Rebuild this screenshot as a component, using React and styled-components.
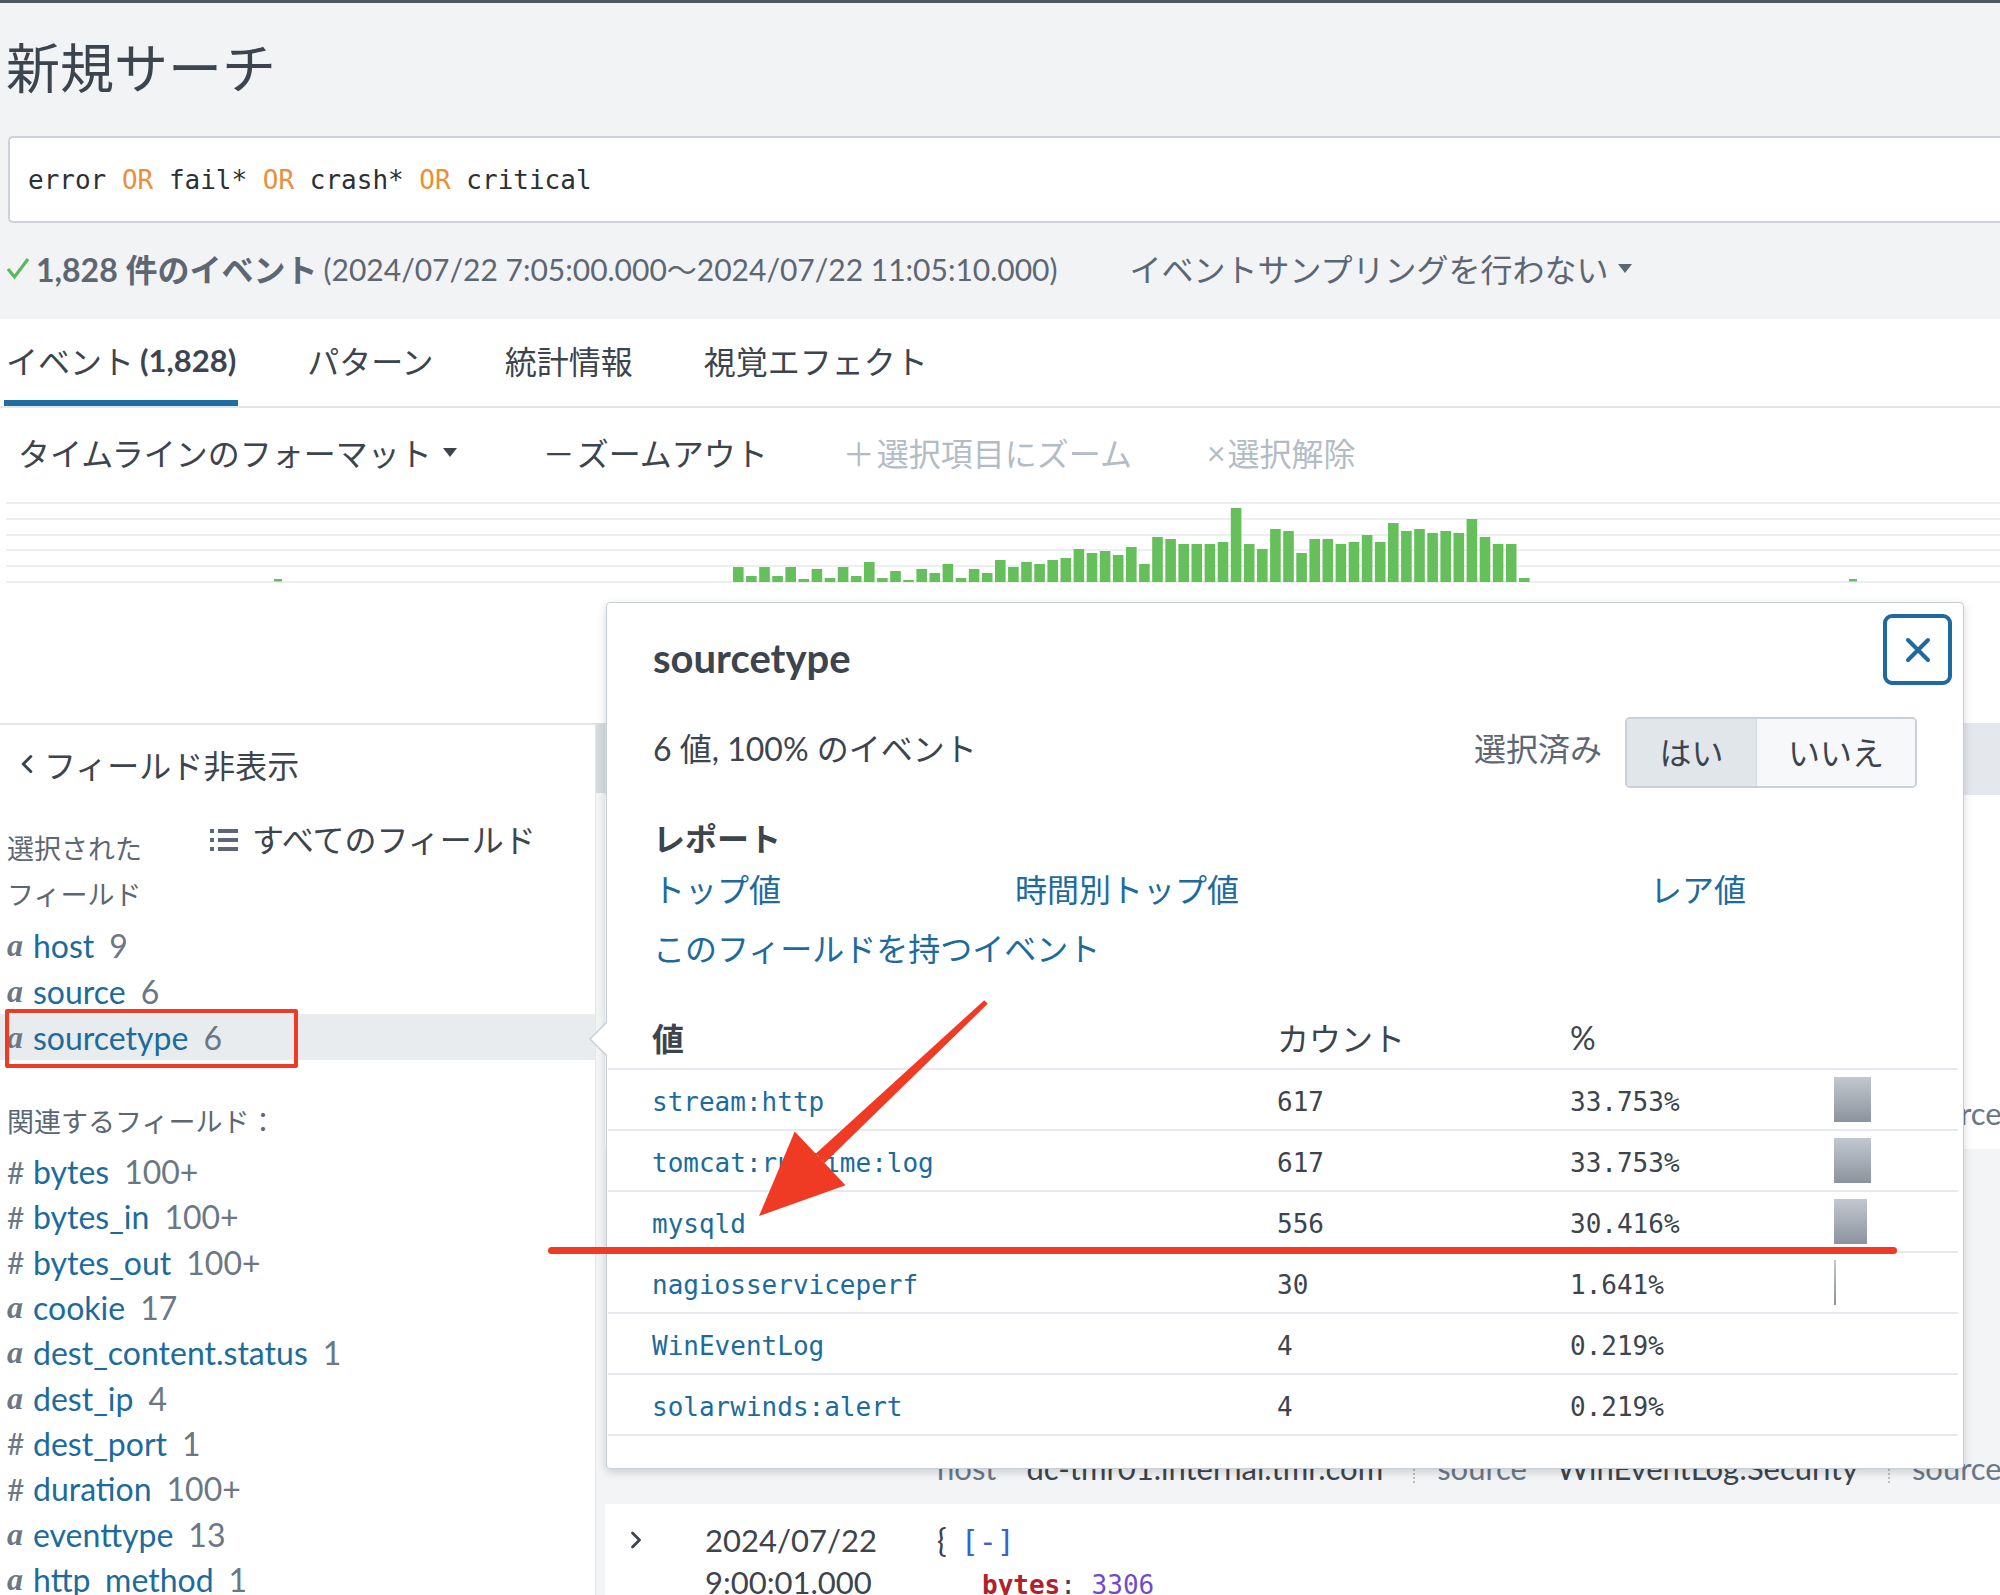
import React from 'react';
import styled, { createGlobalStyle } from 'styled-components';
import { ChevronLeft, ChevronRight } from 'lucide-react';

const SANS = `"Lato", "Noto Sans CJK JP", sans-serif`;
const MONO = `"DejaVu Sans Mono", "Noto Sans CJK JP", monospace`;
const TEXT = '#3c444d';
const GRAY = '#5c6773';
const LIGHT = '#b3bcc5';
const BLUE = '#1c6b9c';
const RED = '#ef3b24';

const Global = createGlobalStyle`
  html, body { margin: 0; padding: 0; background: #fff; }
  body { font-family: ${SANS}; color: ${TEXT}; }
`;

const Page = styled.div`
  position: relative;
  width: 2000px;
  height: 1595px;
  overflow: hidden;
  background: #fff;
`;

const Header = styled.header`
  background: #f2f3f5;
  border-top: 3px solid #50565d;
  padding-left: 8px;
`;

const Title = styled.h1`
  margin: 0 0 0 -2px;
  padding-top: 6px;
  height: 120px;
  line-height: 120px;
  font-size: 54px;
  font-weight: 400;
  color: ${TEXT};
`;

const SearchBox = styled.div`
  margin-top: 7px;
  height: 87px;
  box-sizing: border-box;
  background: #fff;
  border: 2px solid #cdd3d9;
  border-right: none;
  border-radius: 5px 0 0 5px;
  display: flex;
  align-items: center;
  padding-left: 18px;
  font-family: ${MONO};
  font-size: 26px;
  color: #2b3035;
  white-space: pre;
`;

const Op = styled.span`
  color: #e8903a;
`;

const StatusLine = styled.div`
  height: 90px;
  padding-bottom: 6px;
  display: flex;
  align-items: center;
  font-size: 32px;
  color: ${GRAY};
  margin-left: -2px;
`;

const Count = styled.span`
  font-weight: 700;
  color: ${GRAY};
  margin-left: 6px;
`;

const Range = styled.span`
  margin-left: 6px;
  font-size: 30px;
`;

const Sampling = styled.span`
  margin-left: 72px;
  display: inline-flex;
  align-items: center;
  gap: 8px;
`;

const Caret = ({ color = GRAY }) => (
  <svg width="16" height="11" viewBox="0 0 16 11">
    <path d="M1 1 L15 1 L8 10 Z" fill={color} />
  </svg>
);

const TabsBar = styled.nav`
  height: 89px;
  box-sizing: border-box;
  border-bottom: 2px solid #e3e6ea;
  display: flex;
  align-items: flex-end;
  gap: 67px;
  padding-left: 4px;
`;

const Tab = styled.div`
  height: 86px;
  box-sizing: border-box;
  padding: 0 2px;
  display: flex;
  align-items: center;
  font-size: 32px;
  color: ${TEXT};
  border-bottom: 6px solid ${(p) => (p.$active ? '#1f6ea3' : 'transparent')};
`;

const TabCount = styled.span`
  font-weight: 700;
  font-size: 31px;
  margin-left: 6px;
`;

const Toolbar = styled.div`
  height: 72px;
  margin-top: 8px;
  padding-left: 18px;
  display: flex;
  align-items: center;
  gap: 75px;
  font-size: 32px;
`;

const ToolItem = styled.span`
  display: inline-flex;
  align-items: center;
  gap: 10px;
  margin-right: ${(p) => p.$mr || 0}px;
  color: ${(p) => (p.$disabled ? LIGHT : TEXT)};
`;

const Sign = styled.span`
  font-size: 32px;
  margin-right: -8px;
`;

const ChartWrap = styled.div`
  height: 100px;
`;

const Spacer = styled.div`
  height: 135px;
`;

const Bottom = styled.div`
  display: grid;
  grid-template-columns: 595px 10px 1fr;
  height: 872px;
`;

const Sidebar = styled.aside`
  border-top: 2px solid #e1e6eb;
`;

const HideRow = styled.div`
  display: flex;
  align-items: center;
  height: 40px;
  padding: 19px 0 42px 12px;
  font-size: 32px;
  color: ${TEXT};
  gap: 2px;
`;

const SelectedHead = styled.div`
  display: flex;
  padding-left: 7px;
`;

const SmallLabel = styled.div`
  font-size: 27px;
  line-height: 46px;
  color: ${GRAY};
  width: 203px;
`;

const AllFields = styled.div`
  display: flex;
  align-items: center;
  gap: 14px;
  font-size: 32px;
  line-height: 46px;
  color: ${TEXT};
  margin-top: -9px;
  height: 46px;
`;

const FieldList = styled.div`
  margin-top: ${(p) => p.$mt}px;
`;

const FieldRow = styled.div`
  display: flex;
  align-items: center;
  height: ${(p) => p.$h}px;
  padding-left: 7px;
  background: ${(p) => (p.$hl ? '#e9ecef' : 'transparent')};
  font-size: 32px;
`;

const TypeMark = styled.span`
  width: 26px;
  color: #6b7785;
  font-family: ${(p) => (p.$num ? SANS : '"Liberation Serif", serif')};
  font-style: ${(p) => (p.$num ? 'normal' : 'italic')};
  font-weight: ${(p) => (p.$num ? 400 : 700)};
  font-size: ${(p) => (p.$num ? 30 : 32)}px;
`;

const FieldName = styled.span`
  color: ${BLUE};
`;

const FieldCount = styled.span`
  color: #6b7785;
  margin-left: 15px;
`;

const RelatedHead = styled.div`
  font-size: 27px;
  line-height: 46px;
  color: ${GRAY};
  padding-left: 7px;
  margin-top: 39px;
`;

const ScrollTrack = styled.div`
  background: #f3f4f6;
  border-left: 1px solid #e1e6eb;
`;

const ScrollThumb = styled.div`
  height: 70px;
  background: #d6dbe0;
`;

const Events = styled.section`
  display: flex;
  flex-direction: column;
`;

const EventsHead = styled.div`
  height: 72px;
  background: #e4e8ec;
`;

const EventRow = styled.div`
  height: ${(p) => p.$h}px;
  box-sizing: border-box;
  background: ${(p) => (p.$shade ? '#f2f4f5' : '#fff')};
  display: flex;
  flex-direction: column;
  justify-content: flex-end;
  padding-bottom: ${(p) => p.$pb}px;
`;

const MetaLine = styled.div`
  display: flex;
  align-items: center;
  height: 46px;
  padding-left: 332px;
  font-size: 31px;
  white-space: nowrap;
  gap: 22px;
`;

const MetaKey = styled.span`
  color: #6b7785;
`;

const MetaVal = styled.span`
  color: ${TEXT};
  margin-left: 8px;
`;

const MetaSep = styled.span`
  width: 0;
  height: 30px;
  border-left: 2px dotted #b8c0c8;
  margin-left: 8px;
`;

const EventBody = styled.div`
  display: grid;
  grid-template-columns: 100px 232px 1fr;
  padding-top: 15px;
  font-size: 31px;
  line-height: 42px;
`;

const Expander = styled.div`
  padding-left: 17px;
  height: 42px;
  display: flex;
  align-items: center;
  color: ${TEXT};
`;

const Raw = styled.div`
  font-family: ${MONO};
  font-size: 26px;
`;

const RawIndent = styled.div`
  padding-left: 45px;
`;

const Brace = styled.span`
  font-family: ${SANS};
  font-size: 32px;
  color: ${TEXT};
`;

const Collapse = styled.span`
  color: #3863c9;
  font-size: 30px;
  margin-left: 14px;
`;

const JKey = styled.span`
  color: #b0222a;
  font-weight: 700;
`;

const JNum = styled.span`
  color: #6f4bc9;
`;

/* Popup */
const Popup = styled.div`
  position: absolute;
  left: 606px;
  top: 602px;
  width: 1358px;
  height: 867px;
  box-sizing: border-box;
  background: #fff;
  border: 1px solid #c7ced5;
  border-radius: 4px;
  box-shadow: 0 3px 10px rgba(0, 0, 0, 0.16);
  padding: 0 46px;
  z-index: 2;
  &::before,
  &::after {
    content: '';
    position: absolute;
    top: 418px;
    width: 0;
    height: 0;
    border-top: 18px solid transparent;
    border-bottom: 18px solid transparent;
  }
  &::before {
    left: -18px;
    border-right: 18px solid #c7ced5;
  }
  &::after {
    left: -16px;
    border-right: 18px solid #fff;
  }
`;

const PopHeader = styled.div`
  height: 114px;
  display: flex;
  justify-content: space-between;
  align-items: center;
`;

const PopTitle = styled.h2`
  margin: 0 0 4px;
  font-size: 40px;
  font-weight: 700;
  color: ${TEXT};
`;

const CloseButton = styled.button`
  align-self: flex-start;
  margin-top: 11px;
  margin-right: -35px;
  width: 69px;
  height: 71px;
  box-sizing: border-box;
  border: 4px solid #1e6aa0;
  border-radius: 9px;
  background: #fff;
  display: flex;
  align-items: center;
  justify-content: center;
  padding: 0;
`;

const SummaryRow = styled.div`
  height: 71px;
  display: flex;
  align-items: center;
  justify-content: space-between;
  font-size: 32px;
  color: ${TEXT};
`;

const Lifted = styled.span`
  margin-bottom: 12px;
`;

const SelGroup = styled.div`
  display: flex;
  align-items: center;
  gap: 23px;
  color: ${GRAY};
`;

const Toggle = styled.div`
  display: flex;
  height: 71px;
  box-sizing: border-box;
  border: 2px solid #c9d0d7;
  border-radius: 5px;
  overflow: hidden;
`;

const ToggleOpt = styled.div`
  width: ${(p) => p.$w}px;
  display: flex;
  align-items: center;
  justify-content: center;
  padding-bottom: 4px;
  background: ${(p) => (p.$on ? '#e1e6eb' : '#f7f8fa')};
  color: ${TEXT};
  border-left: ${(p) => (p.$first ? 'none' : '1px solid #d5dbe1')};
`;

const ReportTitle = styled.div`
  margin-top: 28px;
  line-height: 46px;
  font-size: 32px;
  font-weight: 700;
  color: ${TEXT};
`;

const Links = styled.div`
  display: grid;
  grid-template-columns: 362px 635px auto;
  margin-top: 5px;
  line-height: 46px;
  font-size: 32px;
`;

const Link = styled.a`
  color: ${BLUE};
  text-decoration: none;
`;

const EventsLink = styled(Link)`
  display: block;
  margin-top: 13px;
  line-height: 46px;
  font-size: 32px;
`;

const Table = styled.div`
  margin: 34px -41px 0 -45px;
`;

const TRow = styled.div`
  display: grid;
  grid-template-columns: 669px 293px 264px 1fr;
  height: ${(p) => (p.$head ? 64 : 61)}px;
  box-sizing: border-box;
  border-bottom: 2px solid #e6e9ed;
  align-items: center;
`;

const TH = styled.div`
  font-size: 32px;
  font-weight: ${(p) => (p.$bold ? 700 : 400)};
  color: ${TEXT};
  padding-left: ${(p) => (p.$first ? 44 : 0)}px;
`;

const TD = styled.div`
  font-family: ${MONO};
  font-size: 26px;
  padding-top: 4px;
  color: ${(p) => (p.$link ? BLUE : TEXT)};
  padding-left: ${(p) => (p.$first ? 44 : 0)}px;
`;

const BarCell = styled.div`
  display: flex;
  align-items: center;
  height: 100%;
`;

const Bar = styled.div`
  height: 45px;
  background: linear-gradient(180deg, #c3c8cf 0%, #8b939e 100%);
`;

/* Annotations */
const RedBox = styled.div`
  position: absolute;
  left: 5px;
  top: 1009px;
  width: 293px;
  height: 59px;
  box-sizing: border-box;
  border: 4px solid ${RED};
  border-radius: 2px;
  z-index: 3;
`;

const RedLine = styled.div`
  position: absolute;
  left: 548px;
  top: 1247px;
  width: 1349px;
  height: 7px;
  border-radius: 4px;
  background: ${RED};
  z-index: 3;
`;

const ArrowSvg = styled.svg`
  position: absolute;
  left: 0;
  top: 0;
  z-index: 3;
  pointer-events: none;
`;

const BARS = [15, 6, 15, 6, 15, 3, 13, 4, 15, 6, 20, 4, 11, 2, 13, 9, 18, 4, 13, 9, 22, 15, 20, 18, 22, 24, 33, 29, 31, 27, 35, 18, 45, 43, 38, 38, 38, 40, 74, 38, 33, 53, 51, 29, 43, 43, 38, 40, 47, 40, 59, 51, 53, 49, 51, 49, 63, 45, 38, 38, 4];

const Chart = () => (
  <svg width="2000" height="100" viewBox="0 0 2000 100">
    {[15, 31, 47, 62, 78, 94].map((y) => (
      <line key={y} x1="6" x2="2000" y1={y} y2={y} stroke="#eceef1" strokeWidth="2" />
    ))}
    <rect x="274" y="91" width="8" height="2.5" fill="#65bf5a" />
    <rect x="1849" y="91" width="8" height="2.5" fill="#65bf5a" />
    {BARS.map((h, i) => (
      <rect key={i} x={733 + i * 13.1} y={94 - h} width="10.6" height={h} fill="#65bf5a" />
    ))}
  </svg>
);

const ListIcon = () => (
  <svg width="28" height="24" viewBox="0 0 28 24">
    {[3, 12, 21].map((y) => (
      <g key={y}>
        <rect x="0" y={y - 2} width="4" height="4" fill={GRAY} />
        <rect x="8" y={y - 2} width="20" height="4" fill={GRAY} />
      </g>
    ))}
  </svg>
);

const SELECTED = [
  { t: 'a', n: 'host', c: '9' },
  { t: 'a', n: 'source', c: '6' },
  { t: 'a', n: 'sourcetype', c: '6', hl: true },
];

const RELATED = [
  { t: '#', n: 'bytes', c: '100+' },
  { t: '#', n: 'bytes_in', c: '100+' },
  { t: '#', n: 'bytes_out', c: '100+' },
  { t: 'a', n: 'cookie', c: '17' },
  { t: 'a', n: 'dest_content.status', c: '1' },
  { t: 'a', n: 'dest_ip', c: '4' },
  { t: '#', n: 'dest_port', c: '1' },
  { t: '#', n: 'duration', c: '100+' },
  { t: 'a', n: 'eventtype', c: '13' },
  { t: 'a', n: 'http_method', c: '1' },
];

const VALUES = [
  { v: 'stream:http', c: '617', p: 33.753 },
  { v: 'tomcat:runtime:log', c: '617', p: 33.753 },
  { v: 'mysqld', c: '556', p: 30.416 },
  { v: 'nagiosserviceperf', c: '30', p: 1.641 },
  { v: 'WinEventLog', c: '4', p: 0.219 },
  { v: 'solarwinds:alert', c: '4', p: 0.219 },
];

const Field = ({ f, h }) => (
  <FieldRow $h={h} $hl={f.hl}>
    <TypeMark $num={f.t === '#'}>{f.t}</TypeMark>
    <FieldName>{f.n}</FieldName>
    <FieldCount>{f.c}</FieldCount>
  </FieldRow>
);

const Meta = () => (
  <MetaLine>
    <MetaKey>host</MetaKey>
    <MetaVal>dc-tmr01.internal.tmr.com</MetaVal>
    <MetaSep />
    <MetaKey>source</MetaKey>
    <MetaVal>WinEventLog:Security</MetaVal>
    <MetaSep />
    <MetaKey>sourcetype</MetaKey>
    <MetaVal>WinEventLog</MetaVal>
  </MetaLine>
);

/* arrow geometry */
const tip = [759, 1216];
const tail = [986, 1002];
const ux = tip[0] - tail[0];
const uy = tip[1] - tail[1];
const len = Math.hypot(ux, uy);
const u = [ux / len, uy / len];
const n = [-u[1], u[0]];
const base = [tip[0] - u[0] * 84, tip[1] - u[1] * 84];
const pt = (p, k) => `${p[0] + n[0] * k},${p[1] + n[1] * k}`;
const shaft = [pt(tail, 2.5), pt(tail, -2.5), pt(base, -6.5), pt(base, 6.5)].join(' ');
const head = [`${tip[0]},${tip[1]}`, pt(base, 37), pt(base, -37)].join(' ');

export default function App() {
  return (
    <Page>
      <Global />
      <Header>
        <Title>新規サーチ</Title>
        <SearchBox>
          error <Op>OR</Op> fail* <Op>OR</Op> crash* <Op>OR</Op> critical
        </SearchBox>
        <StatusLine>
          <svg width="24" height="24" viewBox="0 0 24 24">
            <path d="M2 13 L8.5 21 L22 3" fill="none" stroke="#5cb85c" strokeWidth="3.2" />
          </svg>
          <Count>1,828 件のイベント</Count>
          <Range>(2024/07/22 7:05:00.000〜2024/07/22 11:05:10.000)</Range>
          <Sampling>
            イベントサンプリングを行わない
            <Caret />
          </Sampling>
        </StatusLine>
      </Header>

      <TabsBar>
        <Tab $active>
          イベント<TabCount>(1,828)</TabCount>
        </Tab>
        <Tab>パターン</Tab>
        <Tab>統計情報</Tab>
        <Tab>視覚エフェクト</Tab>
      </TabsBar>

      <Toolbar>
        <ToolItem $mr={10}>
          タイムラインのフォーマット
          <Caret color={TEXT} />
        </ToolItem>
        <ToolItem>
          <Sign>－</Sign>ズームアウト
        </ToolItem>
        <ToolItem $disabled>
          <Sign>＋</Sign>選択項目にズーム
        </ToolItem>
        <ToolItem $disabled>
          <Sign>×</Sign>選択解除
        </ToolItem>
      </Toolbar>

      <ChartWrap>
        <Chart />
      </ChartWrap>
      <Spacer />

      <Bottom>
        <Sidebar>
          <HideRow>
            <ChevronLeft size={30} strokeWidth={2.4} color={TEXT} />
            フィールド非表示
          </HideRow>
          <SelectedHead>
            <SmallLabel>
              選択された
              <br />
              フィールド
            </SmallLabel>
            <AllFields>
              <ListIcon />
              すべてのフィールド
            </AllFields>
          </SelectedHead>
          <FieldList $mt={4}>
            {SELECTED.map((f) => (
              <Field key={f.n} f={f} h={46} />
            ))}
          </FieldList>
          <RelatedHead>関連するフィールド：</RelatedHead>
          <FieldList $mt={4}>
            {RELATED.map((f) => (
              <Field key={f.n} f={f} h={45.3} />
            ))}
          </FieldList>
        </Sidebar>
        <ScrollTrack>
          <ScrollThumb />
        </ScrollTrack>
        <Events>
          <EventsHead />
          <EventRow $h={354} $pb={13}>
            <Meta />
          </EventRow>
          <EventRow $h={355} $pb={13} $shade>
            <Meta />
          </EventRow>
          <EventBody>
            <Expander>
              <ChevronRight size={28} strokeWidth={2.4} />
            </Expander>
            <div>
              2024/07/22
              <br />
              9:00:01.000
            </div>
            <Raw>
              <div>
                <Brace>{'{'}</Brace>
                <Collapse>[-]</Collapse>
              </div>
              <RawIndent>
                <JKey>bytes</JKey>: <JNum>3306</JNum>
              </RawIndent>
            </Raw>
          </EventBody>
        </Events>
      </Bottom>

      <Popup>
        <PopHeader>
          <PopTitle>sourcetype</PopTitle>
          <CloseButton aria-label="close">
            <svg width="26" height="26" viewBox="0 0 26 26">
              <path d="M3 3 L23 23 M23 3 L3 23" stroke="#1e6aa0" strokeWidth="4" strokeLinecap="round" />
            </svg>
          </CloseButton>
        </PopHeader>
        <SummaryRow>
          <Lifted>6 値, 100% のイベント</Lifted>
          <SelGroup>
            <Lifted>選択済み</Lifted>
            <Toggle>
              <ToggleOpt $w={129} $on $first>
                はい
              </ToggleOpt>
              <ToggleOpt $w={158}>いいえ</ToggleOpt>
            </Toggle>
          </SelGroup>
        </SummaryRow>
        <ReportTitle>レポート</ReportTitle>
        <Links>
          <Link>トップ値</Link>
          <Link>時間別トップ値</Link>
          <Link>レア値</Link>
        </Links>
        <EventsLink>このフィールドを持つイベント</EventsLink>
        <Table>
          <TRow $head>
            <TH $first $bold>
              値
            </TH>
            <TH>カウント</TH>
            <TH>%</TH>
            <div />
          </TRow>
          {VALUES.map((r) => (
            <TRow key={r.v}>
              <TD $first $link>
                {r.v}
              </TD>
              <TD>{r.c}</TD>
              <TD>{r.p.toFixed(3)}%</TD>
              <BarCell>
                <Bar style={{ width: `${r.p * 1.096}px` }} />
              </BarCell>
            </TRow>
          ))}
        </Table>
      </Popup>

      <RedBox />
      <RedLine />
      <ArrowSvg width="2000" height="1595" viewBox="0 0 2000 1595">
        <polygon points={shaft} fill={RED} />
        <polygon points={head} fill={RED} />
      </ArrowSvg>
    </Page>
  );
}
